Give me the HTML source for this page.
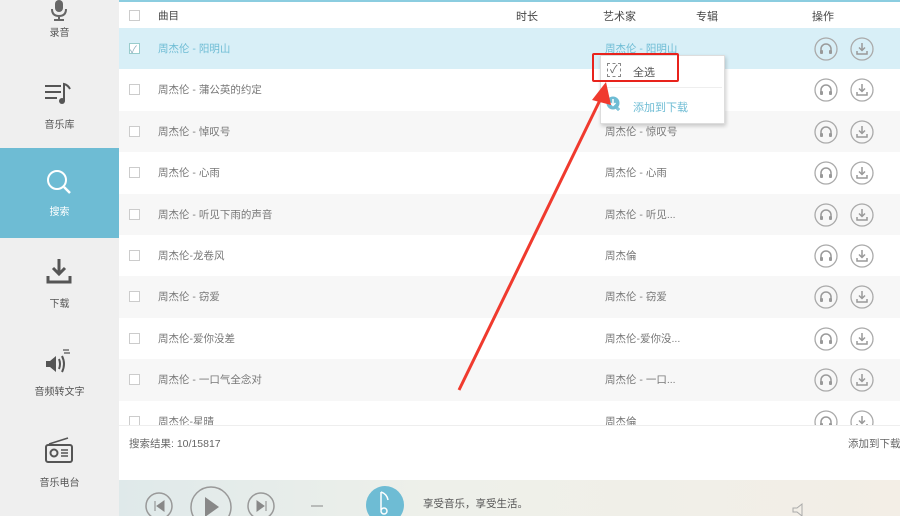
<!DOCTYPE html><html><head><meta charset="utf-8"><style>
*{margin:0;padding:0;box-sizing:border-box}
html,body{width:900px;height:516px;overflow:hidden}
body{position:relative;background:#fff;font-family:"Liberation Sans","Noto Sans CJK SC",sans-serif;font-size:11px;color:#666}
#side{position:absolute;left:0;top:0;width:119px;height:516px;background:#efefef}
.it{position:absolute;left:0;width:119px;height:90px;text-align:center;color:#555;font-size:10px}
.it span{position:absolute;left:0;right:0}
.act{background:#6ebcd4;color:#fff}
#main{position:absolute;left:119px;top:0;right:0;height:480px;overflow:hidden}
.row{position:absolute;left:0;right:0;height:41.4px}
.cb{position:absolute;left:10px;width:11px;height:11px;border:1px solid #ccc;background:#fff}
.t{position:absolute;left:39px;font-size:10.5px;color:#777}
.a{position:absolute;left:486px;font-size:10.5px;color:#777}
.ic{position:absolute;top:9px}
#player{position:absolute;left:119px;top:480px;right:0;height:36px;overflow:hidden;background:linear-gradient(90deg,#dfe9ea,#eef0ea 40%,#f3eee6)}
</style></head><body>
<div id="side">
<div class="it" style="top:-58px"><svg style="position:absolute;left:49px;top:58px" width="20" height="24" viewBox="0 0 20 24"><rect x="6" y="0" width="8" height="12" rx="4" fill="#666"/><path d="M3 9q0 7 7 7q7 0 7-7M10 16v4M5 20h10" stroke="#666" stroke-width="2" fill="none"/></svg><span style="top:82px">录音</span></div>
<div class="it" style="top:59px"><svg style="position:absolute;left:43px;top:22px" width="30" height="26" viewBox="0 0 30 26"><path d="M2 5h16M2 11h16M2 17h12M21 20V3q4 1 6 5" stroke="#555" stroke-width="2" fill="none"/><circle cx="19" cy="20" r="3" fill="#555"/></svg><span style="top:57px">音乐库</span></div>
<div class="it act" style="top:148px"><svg style="position:absolute;left:45px;top:20px" width="28" height="28" viewBox="0 0 28 28"><circle cx="12" cy="12" r="9" stroke="#fff" stroke-width="2" fill="none"/><path d="M19 19l6 6" stroke="#fff" stroke-width="2.5"/></svg><span style="top:55px">搜索</span></div>
<div class="it" style="top:238px"><svg style="position:absolute;left:46px;top:20px" width="26" height="26" viewBox="0 0 26 26"><path d="M13 1v14M7 10l6 6 6-6" stroke="#555" stroke-width="3" fill="none"/><path d="M2 18v6h22v-6" stroke="#555" stroke-width="3" fill="none"/></svg><span style="top:57px">下载</span></div>
<div class="it" style="top:327px"><svg style="position:absolute;left:44px;top:20px" width="30" height="30" viewBox="0 0 30 30"><path d="M2 14h4l6-5v16l-6-5H2z" fill="#555"/><path d="M15 12q2 5 0 10M18 9q4 8 0 16" stroke="#555" stroke-width="2" fill="none"/><path d="M19 3h6M20 6h6" stroke="#555" stroke-width="1.3"/></svg><span style="top:56px">音频转文字</span></div>
<div class="it" style="top:416px"><svg style="position:absolute;left:44px;top:21px" width="30" height="28" viewBox="0 0 30 28"><path d="M5 7L24 1" stroke="#555" stroke-width="1.5"/><rect x="2" y="8" width="26" height="17" rx="2" stroke="#555" stroke-width="2" fill="none"/><circle cx="10" cy="16" r="3.5" stroke="#555" stroke-width="2" fill="none"/><path d="M17 13h7M17 16h7M17 19h7" stroke="#555" stroke-width="1.6"/></svg><span style="top:58px">音乐电台</span></div>
</div>
<div id="main">
<div style="position:absolute;left:0;right:0;top:0;height:2px;background:#8bcde0"></div>
<div class="row" style="top:2px;height:26px"><div class="cb" style="top:8px"></div><span class="t" style="top:6px;color:#444">曲目</span><span style="position:absolute;left:397px;top:6px;color:#444">时长</span><span style="position:absolute;left:484px;top:6px;color:#444">艺术家</span><span style="position:absolute;left:577px;top:6px;color:#444">专辑</span><span style="position:absolute;left:693px;top:6px;color:#444">操作</span></div>
<div id="rows"></div>
<div style="position:absolute;left:0;right:0;top:425px;height:55px;background:#fff;border-top:1px solid #eee"><span style="position:absolute;left:10px;top:10px;color:#666;font-size:10.5px">搜索结果: 10/15817</span><span style="position:absolute;left:729px;top:10px;color:#666;font-size:10.5px;white-space:nowrap">添加到下载</span></div>
</div>
<div id="player">
<svg width="781" height="36" style="position:absolute;left:0;top:0">
<circle cx="40" cy="26" r="13" stroke="#999" stroke-width="1.5" fill="none"/><path d="M36 21v10M45 21l-7 5 7 5z" fill="#888" stroke="#888"/>
<circle cx="92" cy="27" r="20" stroke="#999" stroke-width="1.5" fill="none"/><path d="M86 17v20l14-10z" fill="#888"/>
<circle cx="142" cy="26" r="13" stroke="#999" stroke-width="1.5" fill="none"/><path d="M147 21v10M138 21l7 5-7 5z" fill="#888" stroke="#888"/>
<path d="M192 26h12" stroke="#888"/>
<circle cx="266" cy="25" r="19" fill="#6ebcd4"/><path d="M262 12v18" stroke="#fff" stroke-width="1.5"/><circle cx="265" cy="31" r="3" stroke="#fff" fill="none" stroke-width="1.5"/><path d="M262 12q6 2 7 8" stroke="#fff" fill="none" stroke-width="1.5"/>
<path d="M674 28h4l5-4v12l-5-4h-4z" stroke="#aaa" fill="none"/>
</svg>
<span style="position:absolute;left:304px;top:16px;font-size:10.5px;color:#555">享受音乐，享受生活。</span>
</div>
<div style="position:absolute;left:600px;top:55px;width:125px;height:69px;background:#fff;border:1px solid #ddd;box-shadow:1px 2px 4px rgba(0,0,0,.2)">
<div style="position:absolute;left:6px;top:7px;width:14px;height:14px;border:1px dashed #888"></div><span style="position:absolute;left:9px;top:5px;color:#666;font-size:11px">✓</span>
<span style="position:absolute;left:32px;top:8px;color:#555;font-size:11px">全选</span>
<div style="position:absolute;left:2px;right:2px;top:31px;height:1px;background:#eee"></div>
<svg style="position:absolute;left:5px;top:40px" width="16" height="16" viewBox="0 0 16 16"><circle cx="7" cy="7" r="6.5" fill="#6ebcd4"/><path d="M7 3v6M4.5 7L7 9.5 9.5 7" stroke="#fff" stroke-width="1.5" fill="none"/><path d="M12 11v4M10 13h4" stroke="#6ebcd4" stroke-width="1.2"/></svg>
<span style="position:absolute;left:32px;top:43px;color:#6ebcd4;font-size:11px">添加到下载</span>
</div>
<div style="position:absolute;left:592px;top:53px;width:87px;height:29px;border:2px solid #e8231c;border-radius:2px"></div>
<svg style="position:absolute;left:0;top:0" width="900" height="516"><path d="M459 390L602 96" stroke="#f03a2e" stroke-width="3"/><path d="M606 82L592 100L611 105z" fill="#f03a2e"/></svg>
<script>
var d=[["周杰伦 - 阳明山","周杰伦 - 阳明山"],["周杰伦 - 蒲公英的约定",""],["周杰伦 - 悼叹号","周杰伦 - 惊叹号"],["周杰伦 - 心雨","周杰伦 - 心雨"],["周杰伦 - 听见下雨的声音","周杰伦 - 听见..."],["周杰伦-龙卷风","周杰倫"],["周杰伦 - 窃爱","周杰伦 - 窃爱"],["周杰伦-爱你没差","周杰伦-爱你没..."],["周杰伦 - 一口气全念对","周杰伦 - 一口..."],["周杰伦-星晴","周杰倫"]];
var hp='<svg class="ic" style="left:695px" width="24" height="24" viewBox="0 0 24 24"><circle cx="12" cy="12" r="11" stroke="#aaa" stroke-width="1.3" fill="none"/><path d="M7 15v-3a5 5 0 0 1 10 0v3" stroke="#999" stroke-width="1.5" fill="none"/><rect x="6" y="13" width="3" height="4" rx="1" fill="#999"/><rect x="15" y="13" width="3" height="4" rx="1" fill="#999"/></svg>';
var dl='<svg class="ic" style="left:731px" width="24" height="24" viewBox="0 0 24 24"><circle cx="12" cy="12" r="11" stroke="#aaa" stroke-width="1.3" fill="none"/><path d="M12 6v7M9 10.5l3 3 3-3M7 14v3h10v-3" stroke="#999" stroke-width="1.5" fill="none"/></svg>';
var h="";d.forEach(function(r,i){var top=28+i*41.4;var bg=i==0?"#d8eff7":(i%2?"#fff":"#f7f7f7");var c=i==0?"#6ebcd4":"#777";
h+='<div class="row" style="top:'+top+'px;background:'+bg+'"><div class="cb" style="top:15px'+(i==0?';border-color:#9cc':'')+'">'+(i==0?'<span style="position:absolute;left:0;top:-3px;font-size:10px;color:#8ab">✓</span>':'')+'</div><span class="t" style="top:13px;color:'+c+'">'+r[0]+'</span><span class="a" style="top:13px;color:'+c+'">'+r[1]+'</span>'+hp+dl+'</div>';});
document.getElementById("rows").outerHTML=h;
</script>
</body></html>
